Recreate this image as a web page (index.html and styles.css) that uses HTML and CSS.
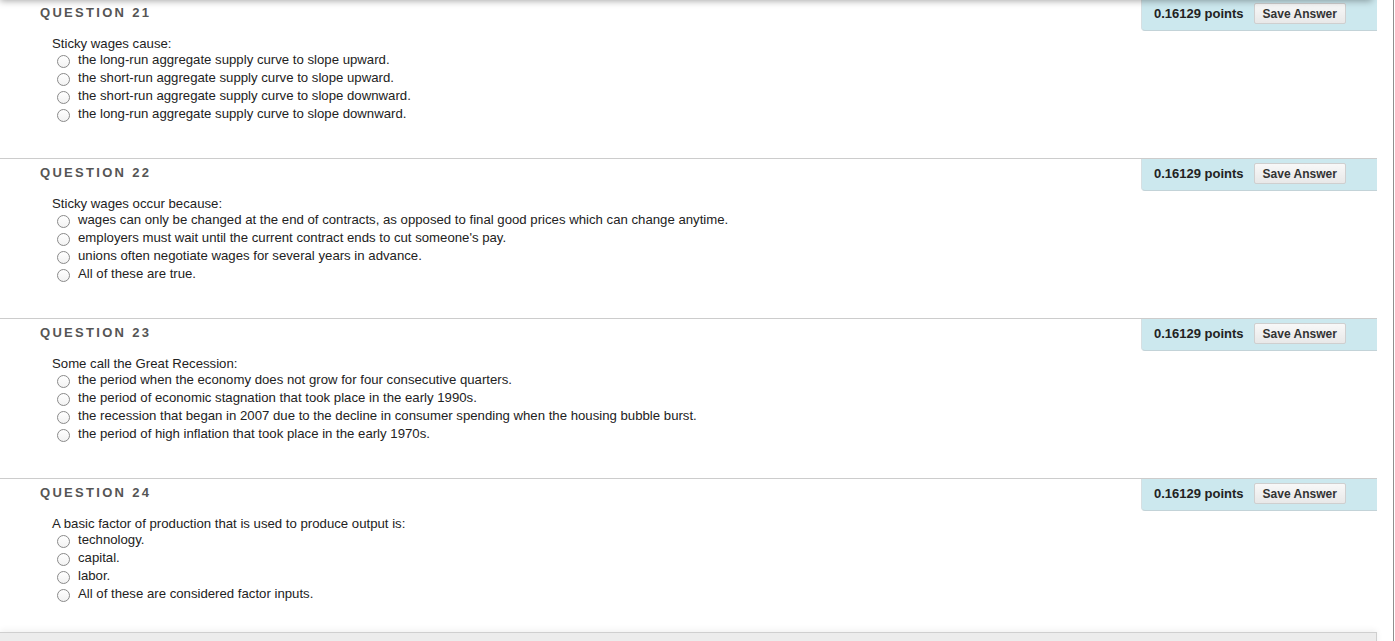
FILE: index.html
```html
<!DOCTYPE html>
<html>
<head>
<meta charset="utf-8">
<link rel="stylesheet" href="styles.css">
</head>
<body>
<div class="layout">
  <main class="page">
    <section class="question">
      <div class="qhead">
        <h3 class="qtitle">QUESTION 21</h3>
        <div class="points"><span class="pts">0.16129 points</span><button class="save">Save Answer</button></div>
      </div>
      <p class="stem">Sticky wages cause:</p>
      <ul class="options">
        <li><span class="radio"></span>the long-run aggregate supply curve to slope upward.</li>
        <li><span class="radio"></span>the short-run aggregate supply curve to slope upward.</li>
        <li><span class="radio"></span>the short-run aggregate supply curve to slope downward.</li>
        <li><span class="radio"></span>the long-run aggregate supply curve to slope downward.</li>
      </ul>
    </section>
    <section class="question">
      <div class="qhead">
        <h3 class="qtitle">QUESTION 22</h3>
        <div class="points"><span class="pts">0.16129 points</span><button class="save">Save Answer</button></div>
      </div>
      <p class="stem">Sticky wages occur because:</p>
      <ul class="options">
        <li><span class="radio"></span>wages can only be changed at the end of contracts, as opposed to final good prices which can change anytime.</li>
        <li><span class="radio"></span>employers must wait until the current contract ends to cut someone's pay.</li>
        <li><span class="radio"></span>unions often negotiate wages for several years in advance.</li>
        <li><span class="radio"></span>All of these are true.</li>
      </ul>
    </section>
    <section class="question">
      <div class="qhead">
        <h3 class="qtitle">QUESTION 23</h3>
        <div class="points"><span class="pts">0.16129 points</span><button class="save">Save Answer</button></div>
      </div>
      <p class="stem">Some call the Great Recession:</p>
      <ul class="options">
        <li><span class="radio"></span>the period when the economy does not grow for four consecutive quarters.</li>
        <li><span class="radio"></span>the period of economic stagnation that took place in the early 1990s.</li>
        <li><span class="radio"></span>the recession that began in 2007 due to the decline in consumer spending when the housing bubble burst.</li>
        <li><span class="radio"></span>the period of high inflation that took place in the early 1970s.</li>
      </ul>
    </section>
    <section class="question">
      <div class="qhead">
        <h3 class="qtitle">QUESTION 24</h3>
        <div class="points"><span class="pts">0.16129 points</span><button class="save">Save Answer</button></div>
      </div>
      <p class="stem">A basic factor of production that is used to produce output is:</p>
      <ul class="options">
        <li><span class="radio"></span>technology.</li>
        <li><span class="radio"></span>capital.</li>
        <li><span class="radio"></span>labor.</li>
        <li><span class="radio"></span>All of these are considered factor inputs.</li>
      </ul>
    </section>
  </main>
  <div class="gutter"></div>
</div>
<div class="topshade"></div>
<div class="footbar"></div>
</body>
</html>
```
FILE: styles.css
```css
html, body {
  margin: 0;
  padding: 0;
  background: #fff;
  overflow: hidden;
}
body {
  font-family: "Liberation Sans", Arial, Helvetica, sans-serif;
  font-size: 13.2px;
  color: #222;
}
.layout {
  display: flex;
  align-items: stretch;
  min-height: 641px;
}
.page {
  width: 1377px;
  margin-top: -2px;
}
.gutter {
  width: 16px;
  border-right: 1px solid #8f8f8f;
}
.question {
  border-top: 1px solid #cccccc;
  height: 159px;
}
.qhead {
  display: flex;
  justify-content: space-between;
  align-items: flex-start;
}
.qtitle {
  margin: 0 0 0 40px;
  padding-top: 6px;
  font-size: 13px;
  line-height: 16px;
  font-weight: bold;
  letter-spacing: 2.3px;
  color: #555;
}
.points {
  display: flex;
  align-items: center;
  gap: 10px;
  width: 236px;
  height: 32px;
  box-sizing: border-box;
  padding: 0 31px 2px 12px;
  background: #cce8ee;
  border-left: 1px solid #d6dfe2;
  border-bottom: 1px solid #c3d3d8;
  border-bottom-left-radius: 4px;
}
.pts {
  font-weight: bold;
  font-size: 13px;
  color: #222;
  white-space: nowrap;
}
.save {
  height: 21px;
  padding: 0 8px;
  font-family: "Liberation Sans", Arial, Helvetica, sans-serif;
  font-size: 12px;
  font-weight: bold;
  color: #333;
  background: linear-gradient(#f8f8f8, #e8e8e8);
  border: 1px solid #cfcfcf;
  border-radius: 2px;
  white-space: nowrap;
}
.stem {
  margin: 5px 0 0 52px;
  line-height: 15px;
}
.options {
  list-style: none;
  margin: 0;
  padding: 0 0 0 57px;
}
.options li {
  display: flex;
  align-items: center;
  gap: 8px;
  height: 18px;
  line-height: 18px;
}
.radio {
  width: 11px;
  height: 11px;
  border: 1px solid #8a8a8a;
  border-radius: 50%;
  background: linear-gradient(#ffffff, #f2f2f2);
  flex: none;
  margin-top: 2px;
}
.topshade {
  position: fixed;
  top: -10px;
  left: 0;
  width: 1372px;
  height: 10px;
  box-shadow: 0 1px 7px rgba(0, 0, 0, 0.35);
  background: #fff;
}
.footbar {
  position: fixed;
  left: 0;
  bottom: -6px;
  width: 1376px;
  height: 14px;
  background: #ececec;
  border-top: 1px solid #cfcfcf;
  border-right: 1px solid #cfcfcf;
  box-shadow: 0 -2px 6px rgba(0, 0, 0, 0.06);
}
```
